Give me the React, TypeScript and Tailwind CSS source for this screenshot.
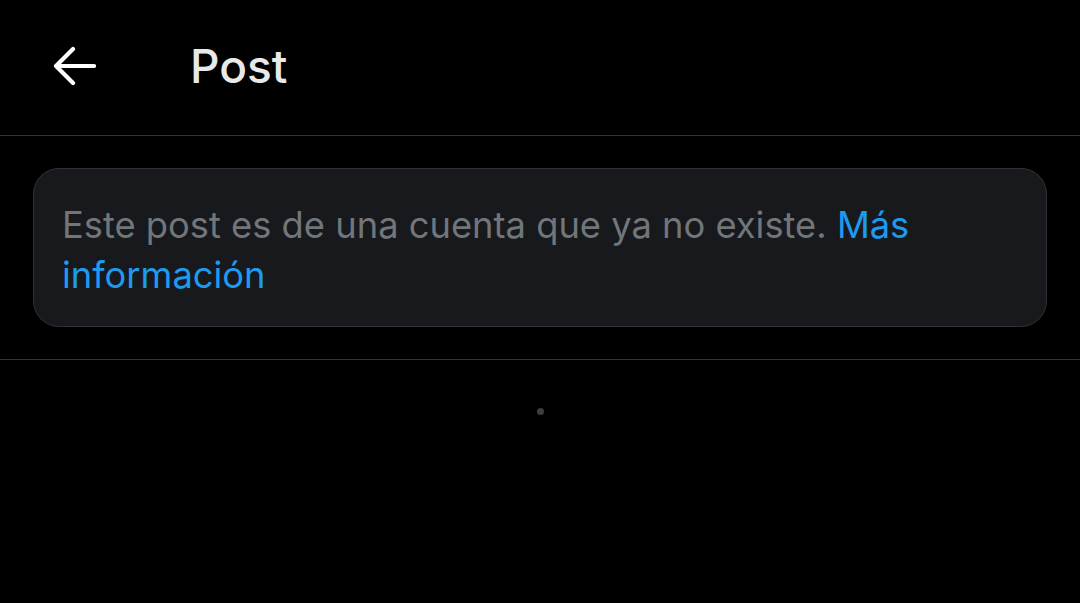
import React from "react";

function BackArrow() {
  return (
    <svg width="44" height="40" viewBox="0 0 44 40" fill="none" className="block">
      <path
        d="M42 20H4M21 3L4 20l17 17"
        stroke="#ffffff"
        strokeWidth="4.2"
        strokeLinecap="round"
        strokeLinejoin="round"
      />
    </svg>
  );
}

export default function App() {
  return (
    <div
      className="w-[1080px] h-[603px] bg-black overflow-hidden"
      style={{ fontFamily: "Inter, Roboto, 'Noto Sans', sans-serif" }}
    >
      <header className="h-[136px] flex items-center border-b border-[#2f3336]">
        <div className="pl-[52px] w-[190px] pb-[4px]">
          <BackArrow />
        </div>
        <h1 className="text-[46px] font-medium text-[#e7e9ea] leading-none pb-[4px]">Post</h1>
      </header>
      <div className="px-[33px] pt-[32px] pb-[32px] border-b border-[#2f3336]">
        <div className="rounded-[26px] bg-[#17191d] border border-[#2f3336] pl-[28px] pr-[30px] pt-[31px] pb-[26px]">
          <p className="text-[36.3px] leading-[50px] text-[#71767b]">
            Este post es de una cuenta que ya no existe.{" "}
            <span className="text-[#1d9bf0]">Más información</span>
          </p>
        </div>
      </div>
      <div className="flex justify-center pt-[48px]">
        <div className="w-[7px] h-[7px] rounded-full bg-[#3b3d40]" />
      </div>
    </div>
  );
}
